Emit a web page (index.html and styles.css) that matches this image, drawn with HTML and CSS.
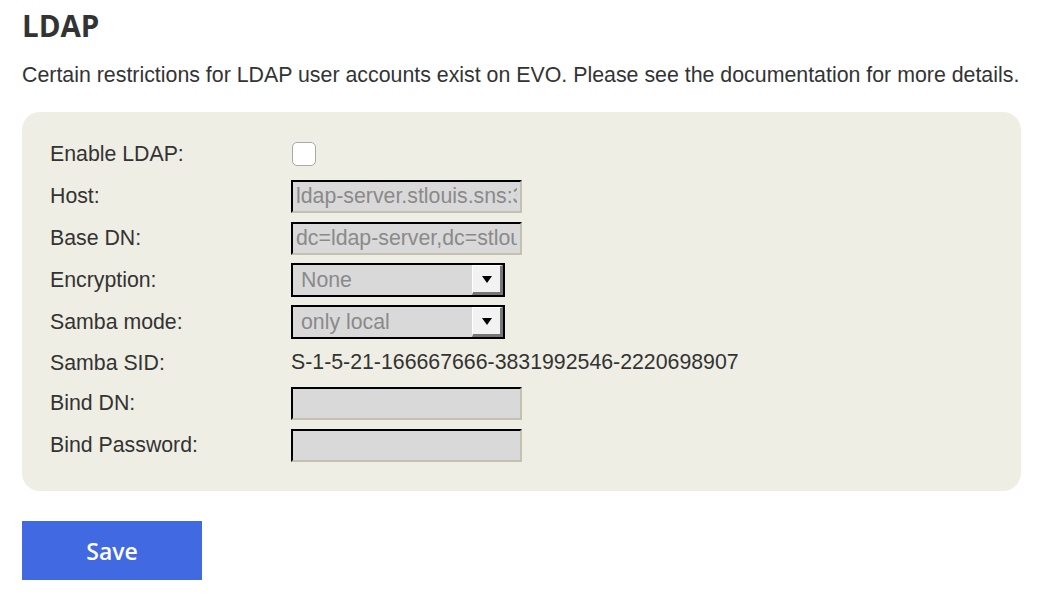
FILE: index.html
```html
<!DOCTYPE html>
<html lang="en">
<head>
    <meta charset="UTF-8">
    <meta name="viewport" content="width=device-width, initial-scale=1.0">
    <title>LDAP - EVO</title>
    <link rel="stylesheet" href="styles.css">
</head>
<body>
    <h1>LDAP</h1>
    <p class="intro">Certain restrictions for LDAP user accounts exist on EVO. Please see the documentation for more details.</p>

    <form class="ldap-panel">
        <div class="row">
            <label for="enable">Enable LDAP:</label>
            <input type="checkbox" id="enable" class="check">
        </div>
        <div class="row">
            <label for="host">Host:</label>
            <input type="text" id="host" class="field" value="ldap-server.stlouis.sns:389" disabled>
        </div>
        <div class="row">
            <label for="basedn">Base DN:</label>
            <input type="text" id="basedn" class="field" value="dc=ldap-server,dc=stlouis,dc=sns" disabled>
        </div>
        <div class="row">
            <label for="encryption">Encryption:</label>
            <div class="select">
                <select id="encryption" disabled>
                    <option>None</option>
                </select>
                <span class="arrow"></span>
            </div>
        </div>
        <div class="row">
            <label for="samba">Samba mode:</label>
            <div class="select">
                <select id="samba" disabled>
                    <option>only local</option>
                </select>
                <span class="arrow"></span>
            </div>
        </div>
        <div class="row row-text">
            <label>Samba SID:</label>
            <span class="value">S-1-5-21-166667666-3831992546-2220698907</span>
        </div>
        <div class="row">
            <label for="binddn">Bind DN:</label>
            <input type="text" id="binddn" class="field" disabled>
        </div>
        <div class="row">
            <label for="bindpw">Bind Password:</label>
            <input type="password" id="bindpw" class="field" disabled>
        </div>
    </form>

    <button type="button" class="save">Save</button>
</body>
</html>
```

FILE: styles.css
```css
* {
    margin: 0;
    padding: 0;
    box-sizing: border-box;
}

body {
    font-family: 'Liberation Sans', Arial, sans-serif;
    color: #333;
    background: #fff;
    padding: 8px 22px 0;
}

h1 {
    font-family: 'Open Sans', sans-serif;
    font-weight: 700;
    font-size: 29.5px;
    line-height: 36px;
    color: #333;
}

.intro {
    font-size: 21.35px;
    line-height: 24px;
    margin-top: 19px;
    white-space: nowrap;
}

.ldap-panel {
    background-color: #efeee4;
    border-radius: 18px;
    margin-top: 25px;
    width: 999px;
    padding: 21px 28px 25px;
}

.row {
    display: grid;
    grid-template-columns: 241px auto;
    align-items: center;
    height: 42px;
}

.row-text {
    height: 39px;
}

.row label {
    font-size: 21.3px;
    color: #333;
    padding-top: 1px;
}

.check {
    appearance: none;
    -webkit-appearance: none;
    width: 24px;
    height: 24px;
    margin-left: 1px;
    background: #fff;
    border: 1px solid #a9a9a9;
    border-radius: 5px;
}

.field {
    width: 231px;
    height: 33px;
    font-family: 'Liberation Sans', Arial, sans-serif;
    font-size: 21.3px;
    color: #8a8a8a;
    background: #d9d9d9;
    padding: 0 3px;
    border-style: solid;
    border-width: 2px;
    border-color: #000 #c4c1ae #c4c1ae #000;
    outline: none;
}

.field:disabled {
    color: #8a8a8a;
    -webkit-text-fill-color: #8a8a8a;
    opacity: 1;
}

.select {
    display: flex;
    width: 214px;
    height: 34px;
    border: 2px solid #000;
    background: #d9d9d9;
}

.select select {
    appearance: none;
    -webkit-appearance: none;
    flex: 1;
    min-width: 0;
    border: none;
    background: transparent;
    font-family: 'Liberation Sans', Arial, sans-serif;
    font-size: 21.3px;
    color: #8a8a8a;
    padding-left: 8px;
    opacity: 1;
}

.arrow {
    width: 31px;
    display: flex;
    align-items: center;
    justify-content: center;
    background: #f2f2f2;
    border-style: solid;
    border-width: 1px 3px 3px 1px;
    border-color: #fff #777 #777 #fff;
}

.arrow::after {
    content: "";
    border-left: 5px solid transparent;
    border-right: 5px solid transparent;
    border-top: 7px solid #000;
}

.value {
    font-size: 21.3px;
    color: #333;
}

.save {
    display: block;
    margin-top: 30px;
    width: 180px;
    height: 59px;
    background: #4169e1;
    color: #fff;
    border: none;
    font-family: 'Open Sans', sans-serif;
    font-weight: 600;
    font-size: 23px;
    cursor: pointer;
}
```
